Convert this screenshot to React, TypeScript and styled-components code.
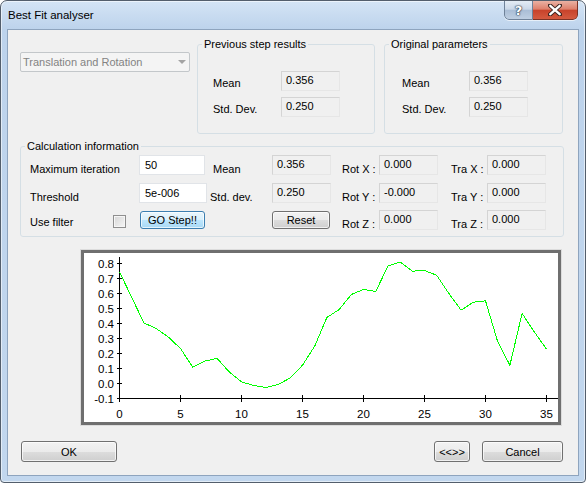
import React from 'react';
import styled, { createGlobalStyle } from 'styled-components';

const GlobalStyle = createGlobalStyle`
  html, body {
    margin: 0;
    padding: 0;
    background: #ffffff;
  }
  body {
    font-family: 'Liberation Sans', Arial, sans-serif;
    font-size: 11px;
    color: #000;
  }
  * {
    box-sizing: border-box;
  }
`;

const Window = styled.div`
  display: flex;
  flex-direction: column;
  width: 586px;
  height: 483px;
  border: 1px solid #535e6c;
  border-radius: 7px 7px 4px 4px;
  background: linear-gradient(180deg, #d4e4f5 0px, #bdd3ec 28px, #c2d7ee 100%);
  box-shadow: inset 0 0 0 1px rgba(255, 255, 255, 0.55);
  overflow: hidden;
`;

const TitleBar = styled.div`
  display: flex;
  align-items: flex-start;
  height: 28px;
  padding-left: 7px;
  flex-shrink: 0;
`;

const TitleText = styled.div`
  margin-top: 7px;
  font-size: 11.5px;
  line-height: 14px;
  color: #000;
`;

const CaptionButtons = styled.div`
  display: flex;
  margin: -1px 7px 0 auto;
  border-radius: 0 0 5px 5px;
  overflow: hidden;
  box-shadow: 0 1px 0 rgba(255, 255, 255, 0.6);
`;

const CaptionButton = styled.div<{ $kind: 'help' | 'close' }>`
  display: flex;
  align-items: center;
  justify-content: center;
  width: ${(p) => (p.$kind === 'help' ? 29 : 45)}px;
  height: 20px;
  border: 1px solid ${(p) => (p.$kind === 'help' ? '#6f8299' : '#7a3226')};
  border-left-width: ${(p) => (p.$kind === 'help' ? 1 : 0)}px;
  border-radius: ${(p) => (p.$kind === 'help' ? '0 0 0 5px' : '0 0 5px 0')};
  background: ${(p) =>
    p.$kind === 'help'
      ? 'linear-gradient(180deg, #e4ecf5 0%, #cbd8e8 45%, #aabed6 52%, #bfcfe2 100%)'
      : 'linear-gradient(180deg, #eab1a3 0%, #de806c 45%, #c8432b 52%, #d45a40 100%)'};
  color: #fff;
  font-family: 'DejaVu Sans', sans-serif;
  font-weight: bold;
  font-size: 13px;
  text-shadow: 0 0 1px #27384d, 0 0 1px #27384d, 0 0 2px #27384d;
`;

const Client = styled.div`
  flex: 1;
  display: flex;
  flex-direction: column;
  margin: 0 6px 6px 6px;
  padding: 7px 14px 0 12px;
  border: 1px solid #8ea4be;
  background: #f0f0f0;
`;

const TopRow = styled.div`
  display: flex;
  align-items: flex-start;
`;

const Combo = styled.div`
  display: flex;
  align-items: center;
  width: 170px;
  height: 20px;
  margin-top: 15px;
  padding-left: 2px;
  border: 1px solid #c3c7ca;
  border-radius: 2px;
  background: #f4f4f4;
  color: #838383;
  line-height: 18px;
`;

const ComboText = styled.span`
  flex: 1;
`;

const ComboArrow = styled.span`
  width: 0;
  height: 0;
  margin-right: 3px;
  border-left: 4px solid transparent;
  border-right: 4px solid transparent;
  border-top: 4px solid #a3a3a3;
`;

const Group = styled.fieldset<{ $width?: number; $gap?: number; $top?: number }>`
  min-width: 0;
  width: ${(p) => (p.$width ? `${p.$width}px` : 'auto')};
  margin: ${(p) => p.$top ?? 0}px 0 0 ${(p) => p.$gap ?? 0}px;
  padding: 0;
  border: 1px solid #d5dfe5;
  border-radius: 3px;
`;

const Legend = styled.legend`
  margin-left: 4px;
  padding: 0 2px;
  font-size: 11px;
  line-height: 14px;
`;

const ResultBody = styled.div<{ $indent: number }>`
  display: flex;
  flex-direction: column;
  gap: 6px;
  padding: 20px 0 16px ${(p) => p.$indent}px;
`;

const ResultRow = styled.div`
  display: flex;
  height: 20px;
`;

const ResultLabel = styled.div<{ $width: number }>`
  width: ${(p) => p.$width}px;
  padding-top: 5px;
  line-height: 14px;
`;

const ReadOnlyField = styled.div<{ $width?: number }>`
  width: ${(p) => p.$width ?? 59}px;
  height: 20px;
  padding-left: 4px;
  border: 1px solid #d4d4d4;
  border-right-color: #e6e6e6;
  border-bottom-color: #e6e6e6;
  background: #f0f0f0;
  line-height: 17px;
`;

const EditField = styled.input<{ $width: number }>`
  width: ${(p) => p.$width}px;
  height: 20px;
  margin: 0;
  padding: 0 0 0 5px;
  border: 1px solid #e1e4e8;
  background: #ffffff;
  font: 11px 'Liberation Sans', Arial, sans-serif;
  color: #000;
  outline: none;
`;

const CalcGrid = styled.div`
  display: grid;
  grid-template-columns: 109px 66px 67px 59px 48px 59px 49px 59px;
  grid-template-rows: 28px 27px 20px;
  align-items: start;
  padding: 2px 0 6px 9px;
`;

const CalcLabel = styled.div<{ $pad?: number; $top?: number }>`
  padding-left: ${(p) => p.$pad ?? 0}px;
  padding-top: ${(p) => p.$top ?? 7}px;
  line-height: 14px;
  white-space: nowrap;
`;

const FilterCell = styled.div`
  display: flex;
  align-items: flex-start;
`;

const CheckBox = styled.span`
  width: 13px;
  height: 13px;
  margin: 5px 13px 0 auto;
  border: 1px solid #8f8f8f;
  background: linear-gradient(135deg, #d6d6d6 0%, #f7f7f7 100%);
  box-shadow: inset 0 0 0 1px #f6f6f6;
`;

const PushButton = styled.button<{ $w: number; $h?: number; $default?: boolean; $ml?: number; $mt?: number }>`
  width: ${(p) => p.$w}px;
  height: ${(p) => p.$h ?? 21}px;
  margin: ${(p) => p.$mt ?? 0}px 0 0 ${(p) => p.$ml ?? 0}px;
  padding: 0;
  font: 11px 'Liberation Sans', Arial, sans-serif;
  line-height: 14px;
  color: #000;
  border: 1px solid ${(p) => (p.$default ? '#3c7fb1' : '#707070')};
  border-radius: 3px;
  background: ${(p) =>
    p.$default
      ? 'linear-gradient(180deg, #eaf6fd 0%, #d9f0fc 50%, #bee6fd 51%, #a7d9f5 100%)'
      : 'linear-gradient(180deg, #f2f2f2 0%, #ebebeb 50%, #dddddd 51%, #cfcfcf 100%)'};
  box-shadow: inset 0 0 0 1px rgba(255, 255, 255, 0.7);
`;

const ChartFrame = styled.div`
  width: 480px;
  height: 175px;
  margin: 13px 0 0 61px;
  border: 3px solid #6f6f6f;
  background: #ffffff;
  box-shadow: 0 0 0 1px #dcdcdc;
`;

const ButtonRow = styled.div`
  display: flex;
  margin-top: 16px;
  padding: 0 1px;
`;

const Spacer = styled.div`
  flex: 1;
`;

const series = [
  0.744, 0.574, 0.404, 0.367, 0.31, 0.233, 0.11, 0.15, 0.167, 0.077, 0.011, -0.013, -0.027,
  -0.007, 0.037, 0.122, 0.249, 0.44, 0.493, 0.593, 0.627, 0.613, 0.782, 0.811, 0.749, 0.753,
  0.722, 0.6, 0.489, 0.542, 0.551, 0.278, 0.122, 0.467, 0.344, 0.229,
];

const sx = (i: number) => 35.5 + i * 12.2;
const sy = (v: number) => 145.5 - (v + 0.1) * 150;

const yTicks = [0.8, 0.7, 0.6, 0.5, 0.4, 0.3, 0.2, 0.1, 0.0, -0.1];
const xTicks = [0, 5, 10, 15, 20, 25, 30, 35];

const Chart: React.FC = () => (
  <ChartFrame>
    <svg width="474" height="169" viewBox="0 0 474 169" style={{ display: 'block' }}>
      <g stroke="#000" strokeWidth="1" shapeRendering="crispEdges">
        <line x1="35.5" y1="4" x2="35.5" y2="145.5" />
        <line x1="35" y1="145.5" x2="474" y2="145.5" />
        {yTicks.map((v) => (
          <line key={v} x1="33" y1={sy(v)} x2="38" y2={sy(v)} />
        ))}
        {xTicks.map((t) => (
          <line key={t} x1={sx(t)} y1="142" x2={sx(t)} y2="149" />
        ))}
      </g>
      <g fontFamily="'Liberation Sans', Arial, sans-serif" fontSize="11.5" fill="#000">
        {yTicks.map((v) => (
          <text key={v} x="30" y={sy(v) + 4} textAnchor="end">
            {v.toFixed(1)}
          </text>
        ))}
        {xTicks.map((t) => (
          <text key={t} x={sx(t)} y="165" textAnchor="middle">
            {t}
          </text>
        ))}
      </g>
      <polyline
        fill="none"
        stroke="#00ff00"
        strokeWidth="1"
        shapeRendering="crispEdges"
        points={series.map((v, i) => `${sx(i)},${sy(v)}`).join(' ')}
      />
    </svg>
  </ChartFrame>
);

const CloseGlyph: React.FC = () => (
  <svg width="14" height="12" viewBox="0 0 14 12">
    <path d="M2 1.5 L12 10.5 M12 1.5 L2 10.5" stroke="#3a2420" strokeWidth="4.2" strokeLinecap="round" />
    <path d="M2.3 1.8 L11.7 10.2 M11.7 1.8 L2.3 10.2" stroke="#ffffff" strokeWidth="2.4" strokeLinecap="round" />
  </svg>
);

const App: React.FC = () => {
  return (
    <>
      <GlobalStyle />
      <Window>
        <TitleBar>
          <TitleText>Best Fit analyser</TitleText>
          <CaptionButtons>
            <CaptionButton $kind="help">?</CaptionButton>
            <CaptionButton $kind="close">
              <CloseGlyph />
            </CaptionButton>
          </CaptionButtons>
        </TitleBar>
        <Client>
          <TopRow>
            <Combo>
              <ComboText>Translation and Rotation</ComboText>
              <ComboArrow />
            </Combo>
            <Group $width={178} $gap={7}>
              <Legend>Previous step results</Legend>
              <ResultBody $indent={15}>
                <ResultRow>
                  <ResultLabel $width={68}>Mean</ResultLabel>
                  <ReadOnlyField>0.356</ReadOnlyField>
                </ResultRow>
                <ResultRow>
                  <ResultLabel $width={68}>Std. Dev.</ResultLabel>
                  <ReadOnlyField>0.250</ReadOnlyField>
                </ResultRow>
              </ResultBody>
            </Group>
            <Group $width={179} $gap={9}>
              <Legend>Original parameters</Legend>
              <ResultBody $indent={17}>
                <ResultRow>
                  <ResultLabel $width={67}>Mean</ResultLabel>
                  <ReadOnlyField>0.356</ReadOnlyField>
                </ResultRow>
                <ResultRow>
                  <ResultLabel $width={67}>Std. Dev.</ResultLabel>
                  <ReadOnlyField>0.250</ReadOnlyField>
                </ResultRow>
              </ResultBody>
            </Group>
          </TopRow>

          <Group $top={5}>
            <Legend>Calculation information</Legend>
            <CalcGrid>
              <CalcLabel>Maximum iteration</CalcLabel>
              <EditField $width={66} defaultValue="50" readOnly />
              <CalcLabel $pad={8}>Mean</CalcLabel>
              <ReadOnlyField>0.356</ReadOnlyField>
              <CalcLabel $pad={11}>Rot X :</CalcLabel>
              <ReadOnlyField>0.000</ReadOnlyField>
              <CalcLabel $pad={13}>Tra X :</CalcLabel>
              <ReadOnlyField>0.000</ReadOnlyField>

              <CalcLabel>Threshold</CalcLabel>
              <EditField $width={68} defaultValue="5e-006" readOnly />
              <CalcLabel $pad={5}>Std. dev.</CalcLabel>
              <ReadOnlyField>0.250</ReadOnlyField>
              <CalcLabel $pad={11}>Rot Y :</CalcLabel>
              <ReadOnlyField>-0.000</ReadOnlyField>
              <CalcLabel $pad={13}>Tra Y :</CalcLabel>
              <ReadOnlyField>0.000</ReadOnlyField>

              <FilterCell>
                <CalcLabel $top={5}>Use filter</CalcLabel>
                <CheckBox />
              </FilterCell>
              <PushButton $w={65} $h={18} $ml={1} $mt={1} $default>
                GO Step!!
              </PushButton>
              <div />
              <PushButton $w={58} $h={18} $mt={1}>
                Reset
              </PushButton>
              <CalcLabel $pad={11}>Rot Z :</CalcLabel>
              <ReadOnlyField>0.000</ReadOnlyField>
              <CalcLabel $pad={13}>Tra Z :</CalcLabel>
              <ReadOnlyField>0.000</ReadOnlyField>
            </CalcGrid>
          </Group>

          <Chart />

          <ButtonRow>
            <PushButton $w={96}>OK</PushButton>
            <Spacer />
            <PushButton $w={36}>&lt;&lt;&gt;&gt;</PushButton>
            <PushButton $w={81} $ml={12}>
              Cancel
            </PushButton>
          </ButtonRow>
        </Client>
      </Window>
    </>
  );
};

export default App;
